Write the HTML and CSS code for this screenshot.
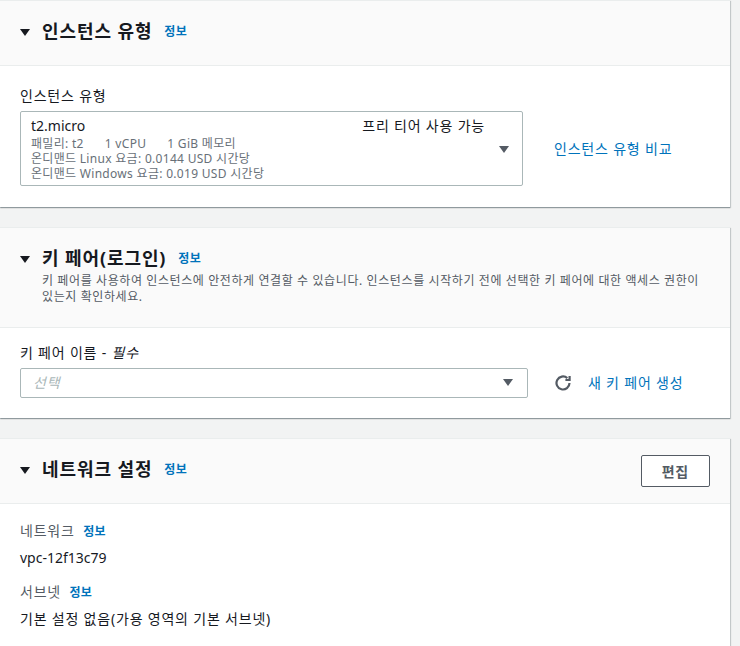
FILE: index.html
```html
<!DOCTYPE html>
<html lang="ko">
<head>
  <meta charset="UTF-8" />
  <meta name="viewport" content="width=device-width, initial-scale=1.0"/>
  <title>인스턴스 시작</title>
  <link rel="stylesheet" href="styles.css">
</head>
<body>

  <!-- 인스턴스 유형 -->
  <section class="panel">
    <div class="panel-head">
      <div class="head-row">
        <span class="toggle"></span>
        <h2>인스턴스 유형</h2>
        <a href="#" class="info">정보</a>
      </div>
    </div>
    <div class="panel-body body-type">
      <div class="field-label">인스턴스 유형</div>
      <div class="field-row">
        <div class="select select-type">
          <div class="option">
            <div class="option-top">
              <span>t2.micro</span>
              <span class="tag">프리 티어 사용 가능</span>
            </div>
            <div class="option-desc">
              <span>패밀리: t2</span><span>1 vCPU</span><span>1 GiB 메모리</span>
            </div>
            <div class="option-desc">온디맨드 Linux 요금: 0.0144 USD 시간당</div>
            <div class="option-desc">온디맨드 Windows 요금: 0.019 USD 시간당</div>
          </div>
          <span class="select-caret"></span>
        </div>
        <a href="#" class="link link-compare">인스턴스 유형 비교</a>
      </div>
    </div>
  </section>

  <!-- 키 페어 -->
  <section class="panel">
    <div class="panel-head">
      <div class="head-row">
        <span class="toggle"></span>
        <h2>키 페어(로그인)</h2>
        <a href="#" class="info">정보</a>
      </div>
      <p class="head-desc">키 페어를 사용하여 인스턴스에 안전하게 연결할 수 있습니다. 인스턴스를 시작하기 전에 선택한 키 페어에 대한 액세스 권한이 있는지 확인하세요.</p>
    </div>
    <div class="panel-body body-key">
      <div class="field-label">키 페어 이름 - <i>필수</i></div>
      <div class="field-row">
        <div class="select select-key">
          <span class="placeholder">선택</span>
          <span class="select-caret"></span>
        </div>
        <button class="refresh" aria-label="새로 고침">
          <svg width="16" height="16" viewBox="0 0 16 16" fill="none" stroke="#545b64" stroke-width="2.2">
            <path d="M14.5 8a6.5 6.5 0 1 1-2.2-4.9"/>
            <path d="M14.6 1v4h-4.2"/>
          </svg>
        </button>
        <a href="#" class="link">새 키 페어 생성</a>
      </div>
    </div>
  </section>

  <!-- 네트워크 설정 -->
  <section class="panel">
    <div class="panel-head">
      <div class="head-row">
        <span class="toggle"></span>
        <h2>네트워크 설정</h2>
        <a href="#" class="info">정보</a>
        <button class="btn-edit">편집</button>
      </div>
    </div>
    <div class="panel-body body-net">
      <div class="kv">
        <div class="kv-label">네트워크 <a href="#" class="info info-sm">정보</a></div>
        <div class="kv-value">vpc-12f13c79</div>
      </div>
      <div class="kv">
        <div class="kv-label">서브넷 <a href="#" class="info info-sm">정보</a></div>
        <div class="kv-value ko">기본 설정 없음(가용 영역의 기본 서브넷)</div>
      </div>
      <div class="kv">
        <div class="kv-label">퍼블릭 IP 자동 할당 <a href="#" class="info info-sm">정보</a></div>
        <div class="kv-value ko">활성화</div>
      </div>
    </div>
  </section>

</body>
</html>
```

FILE: styles.css
```css
* { box-sizing: border-box; }

body {
  margin: 0;
  background-color: #f2f3f3;
  font-family: "Noto Sans", "Noto Sans CJK KR", sans-serif;
  font-size: 14px;
  line-height: 20px;
  color: #16191f;
}

a {
  text-decoration: none;
}

/* 패널 */
.panel {
  width: 730px;
  margin-bottom: 20px;
  background-color: #ffffff;
  border-top: 1px solid #eaeded;
  box-shadow: 0 1px 1px 0 rgba(0, 28, 36, 0.3), 1px 1px 1px 0 rgba(0, 28, 36, 0.15);
}

.panel-head {
  background-color: #fafafa;
  border-bottom: 1px solid #eaeded;
  padding: 18px 20px 22px;
}

.head-row {
  display: flex;
  align-items: center;
  height: 24px;
}

.toggle {
  width: 0;
  height: 0;
  border-left: 5px solid transparent;
  border-right: 5px solid transparent;
  border-top: 7px solid #16191f;
  margin: 3px 12px 0 0;
}

.head-row h2 {
  margin: 0;
  font-size: 18px;
  line-height: 24px;
  font-weight: bold;
  letter-spacing: 0.9px;
}

.info {
  color: #0073bb;
  font-size: 12px;
  font-weight: bold;
  margin-left: 12px;
  margin-top: 2px;
  letter-spacing: 0.3px;
}

.info-sm {
  margin-left: 4px;
  margin-top: 0;
}

.head-desc {
  margin: 3px 0 0 22px;
  font-size: 12px;
  line-height: 16px;
  color: #545b64;
  letter-spacing: 0.6px;
}

.btn-edit {
  margin-left: auto;
  margin-top: 4px;
  height: 32px;
  padding: 0 20px;
  background-color: #ffffff;
  border: 1px solid #545b64;
  border-radius: 2px;
  font-family: inherit;
  font-size: 14px;
  font-weight: bold;
  letter-spacing: 0.8px;
  color: #545b64;
}

/* 본문 */
.panel-body {
  padding: 20px 20px 20px;
}

.body-type {
  padding-bottom: 21px;
}

.body-key {
  padding-top: 15px;
}

.body-net {
  padding-top: 17px;
}

.field-label {
  margin-bottom: 5px;
  letter-spacing: 0.8px;
}

.field-label i {
  font-style: italic;
}

.field-row {
  display: flex;
  align-items: center;
}

.select {
  position: relative;
  display: flex;
  align-items: center;
  border: 1px solid #aab7b8;
  border-radius: 2px;
  background-color: #ffffff;
}

.select-type {
  width: 503px;
  padding: 4px 37px 4px 10px;
}

.select-key {
  width: 508px;
  height: 30px;
  padding: 0 12px;
}

.option {
  flex: 1;
}

.option-top {
  display: flex;
  justify-content: space-between;
}

.tag {
  letter-spacing: 0.8px;
}

.option-desc {
  font-size: 12px;
  line-height: 15px;
  color: #687078;
  letter-spacing: 0.3px;
}

.option-desc span {
  margin-right: 21px;
}

.placeholder {
  color: #aab7b8;
  font-style: italic;
  letter-spacing: 0.8px;
}

.select-caret {
  position: absolute;
  right: 13px;
  top: 50%;
  width: 0;
  height: 0;
  margin-top: -3px;
  border-left: 5px solid transparent;
  border-right: 5px solid transparent;
  border-top: 7px solid #545b64;
}

.select-key .select-caret {
  right: 14px;
  margin-top: -4px;
}

.link {
  color: #0073bb;
  letter-spacing: 0.8px;
}

.link-compare {
  margin-left: 31px;
}

.refresh {
  display: flex;
  margin-left: 27px;
  margin-right: 17px;
  padding: 0;
  border: 0;
  background: none;
}

/* 키-값 목록 */
.kv {
  margin-bottom: 14px;
}

.kv-label {
  color: #545b64;
  margin-bottom: 6px;
  letter-spacing: 0.8px;
}

.kv-value {
  color: #16191f;
}

.kv-value.ko {
  letter-spacing: 0.8px;
}
```
